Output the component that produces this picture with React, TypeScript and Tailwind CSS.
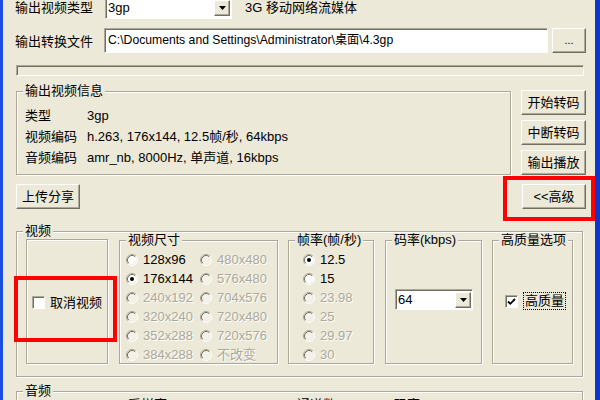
import type { ReactNode } from 'react';

const raised =
  'bg-[#ece9d8] border border-t-white border-l-white border-r-[#716f64] border-b-[#716f64] shadow-[inset_-1px_-1px_0_#aca899]';
const sunken =
  'border border-t-[#aca899] border-l-[#aca899] border-r-white border-b-white shadow-[inset_1px_1px_0_#716f64]';
const etched = 'border border-[#aca899] shadow-[inset_1px_1px_0_#fff,1px_1px_0_#fff]';
const dim = 'text-[#aca899] [text-shadow:1px_1px_0_#fff]';

function Btn({ children, className = '' }: { children: ReactNode; className?: string }) {
  return (
    <button className={`${raised} h-[25px] flex items-center justify-center ${className}`}>
      {children}
    </button>
  );
}

function Combo({ value, className = '' }: { value: string; className?: string }) {
  return (
    <div className={`${sunken} bg-white flex items-center ${className}`}>
      <span className="flex-1 pl-[2px]">{value}</span>
      <div className={`${raised} w-[16px] h-[calc(100%-3px)] mr-px flex items-center justify-center`}>
        <svg width="7" height="4" viewBox="0 0 7 4">
          <path d="M0 0h7L3.5 4z" fill="#000" />
        </svg>
      </div>
    </div>
  );
}

function Check({ checked = false }: { checked?: boolean }) {
  return (
    <div className={`${sunken} w-[13px] h-[13px] bg-white flex items-center justify-center shrink-0`}>
      {checked && (
        <svg width="9" height="9" viewBox="0 0 9 9">
          <path d="M1 4.5l2.3 2.3L8 2" fill="none" stroke="#000" strokeWidth="1.8" />
        </svg>
      )}
    </div>
  );
}

function Radio({ label, checked = false, off = false }: { label: string; checked?: boolean; off?: boolean }) {
  return (
    <div className="flex items-center h-[19px] whitespace-nowrap">
      <svg width="12" height="12" viewBox="0 0 12 12" className="shrink-0">
        <circle cx="6" cy="6" r="5" fill={off ? '#f4f2e8' : '#fff'} />
        <path d="M2.11 9.89A5.5 5.5 0 0 1 9.89 2.11" fill="none" stroke="#aca899" />
        <path d="M2.82 9.18A4.5 4.5 0 0 1 9.18 2.82" fill="none" stroke="#716f64" />
        <path d="M9.89 2.11A5.5 5.5 0 0 1 2.11 9.89" fill="none" stroke="#fff" />
        <path d="M9.18 2.82A4.5 4.5 0 0 1 2.82 9.18" fill="none" stroke="#f1efe2" />
        {checked && <circle cx="6" cy="6" r="2" fill="#000" />}
      </svg>
      <span className={`ml-[5px] ${off ? dim : ''}`}>{label}</span>
    </div>
  );
}

function Group({
  legend,
  className = '',
  children,
}: {
  legend?: string;
  className?: string;
  children?: ReactNode;
}) {
  return (
    <fieldset className={`${etched} min-w-0 shrink-0 ${className}`}>
      {legend && (
        <legend className="ml-[6px] px-[2px] bg-[#ece9d8] leading-[14px] whitespace-nowrap">{legend}</legend>
      )}
      {children}
    </fieldset>
  );
}

const sizes: [string, boolean, string][] = [
  ['128x96', false, '480x480'],
  ['176x144', false, '576x480'],
  ['240x192', true, '704x576'],
  ['320x240', true, '720x480'],
  ['352x288', true, '720x576'],
  ['384x288', true, '不改变'],
];

const rates = ['12.5', '15', '23.98', '25', '29.97', '30'];

export default function App() {
  return (
    <div className="relative w-[600px] h-[400px] overflow-hidden flex bg-[#ece9d8] border-l-[3px] border-r-[5px] border-l-[#1b4fe0] border-r-[#0a37cc] font-['Liberation_Sans','Noto_Sans_CJK_SC',sans-serif] text-[13px] text-black">
      <div className="flex flex-col pl-[13px] w-full">
        {/* output type */}
        <div className="flex items-center h-[22px] -mt-[3px] shrink-0">
          <span className="w-[90px] -ml-px">输出视频类型</span>
          <Combo value="3gp" className="w-[127px] h-[21px]" />
          <span className="ml-[13px]">3G 移动网络流媒体</span>
        </div>

        {/* output file */}
        <div className="flex items-center h-[25px] mt-[9px] shrink-0">
          <span className="w-[89px] -ml-px pt-[3px]">输出转换文件</span>
          <div className={`${sunken} bg-white w-[444px] h-[25px] flex items-center pl-[3px] whitespace-nowrap text-[12.2px]`}>
            C:\Documents and Settings\Administrator\桌面\4.3gp
          </div>
          <Btn className="ml-[4px] w-[34px] text-[11px]">...</Btn>
        </div>

        {/* progress */}
        <div className={`${sunken} mt-[12px] w-[568px] h-[11px] shrink-0`} />

        {/* info + actions */}
        <div className="flex mt-[8px] shrink-0">
          <Group legend="输出视频信息" className="w-[495px] h-[91px]">
            <div className="grid grid-cols-[62px_1fr] auto-rows-[21px] items-center pl-[8px] pt-[7px] whitespace-nowrap">
              <span>类型</span>
              <span>3gp</span>
              <span>视频编码</span>
              <span>h.263, 176x144, 12.5帧/秒, 64kbps</span>
              <span>音频编码</span>
              <span>amr_nb, 8000Hz, 单声道, 16kbps</span>
            </div>
          </Group>
          <div className="flex flex-col gap-[5px] ml-[10px] pt-[6px]">
            <Btn className="w-[65px]">开始转码</Btn>
            <Btn className="w-[65px]">中断转码</Btn>
            <Btn className="w-[65px]">输出播放</Btn>
          </div>
        </div>

        <div className="flex justify-between mt-[9px] w-[570px] shrink-0">
          <Btn className="w-[64px]">上传分享</Btn>
          <Btn className="w-[64px]">&lt;&lt;高级</Btn>
        </div>

        {/* video */}
        <Group legend="视频" className="w-[567px] h-[153px] mt-[15px]">
          <div className="flex items-start pl-[9px] -mt-[5px]">
            <Group className="w-[82px] h-[125px] mt-[6px]">
              <div className="flex items-center pl-[5px] pt-[53px]">
                <Check />
                <span className="ml-[5px]">取消视频</span>
              </div>
            </Group>
            <Group legend="视频尺寸" className="w-[159px] h-[131px] ml-[11px]">
              <div className="grid grid-cols-[74px_auto] pl-[6px] pt-[3px]">
                {sizes.map(([a, offA, b], i) => (
                  <div key={a} className="contents">
                    <Radio label={a} off={offA} checked={i === 1} />
                    <Radio label={b} off />
                  </div>
                ))}
              </div>
            </Group>
            <Group legend="帧率(帧/秒)" className="w-[86px] h-[131px] ml-[10px]">
              <div className="flex flex-col pl-[14px] pt-[3px]">
                {rates.map((r, i) => (
                  <Radio key={r} label={r} checked={i === 0} off={i > 1} />
                ))}
              </div>
            </Group>
            <Group legend="码率(kbps)" className="w-[97px] h-[131px] ml-[11px]">
              <Combo value="64" className="w-[78px] h-[21px] ml-[9px] mt-[42px]" />
            </Group>
            <Group legend="高质量选项" className="w-[81px] h-[131px] ml-[10px]">
              <div className="flex items-center pl-[12px] mt-[45px] h-[18px]">
                <Check checked />
                <span className="ml-[5px] px-[1px] leading-[16px] border border-dotted border-black">高质量</span>
              </div>
            </Group>
          </div>
        </Group>

        {/* audio */}
        <Group legend="音频" className="w-[567px] h-[120px] mt-[7px]">
          <div className="flex items-start pl-[9px]">
            <Group className="w-[82px] h-[100px] mt-[6px]" />
            <Group legend="采样率(Hz)" className="w-[159px] h-[100px] ml-[11px]" />
            <Group legend="通道数" className="w-[86px] h-[100px] ml-[10px]" />
            <Group legend="码率(kbps)" className="w-[97px] h-[100px] ml-[11px]" />
            <Group className="w-[81px] h-[100px] ml-[10px] mt-[6px]" />
          </div>
        </Group>
      </div>

      {/* red highlight annotations */}
      <div className="absolute left-[11px] top-[276px] w-[103px] h-[66px] border-[4px] border-[#ff0000]" />
      <div className="absolute left-[500px] top-[176px] w-[92px] h-[45px] border-[4px] border-[#ff0000]" />
    </div>
  );
}
